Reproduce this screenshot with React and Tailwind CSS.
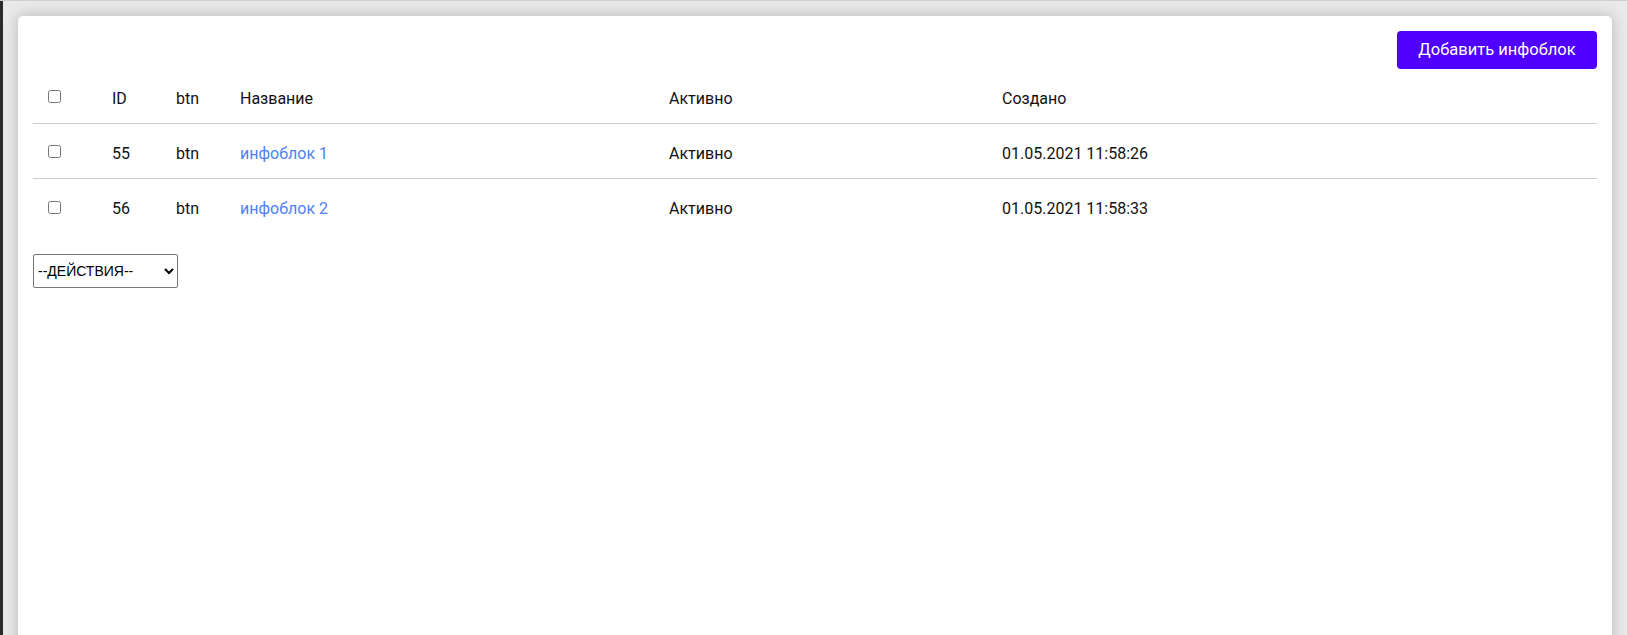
import React from "react";

const rows = [
  { id: 55, name: "инфоблок 1", created: "01.05.2021 11:58:26" },
  { id: 56, name: "инфоблок 2", created: "01.05.2021 11:58:33" },
];

const grid = "grid grid-cols-[79px_64px_64px_429px_333px_1fr] items-center pt-[5px]";

export default function App() {
  return (
    <div className="flex min-h-[635px] h-[635px] overflow-hidden bg-[#e9e9e9] border-t border-[#cfcfcf] font-['Roboto',sans-serif]">
      <div className="w-[3px] shrink-0 bg-[#2b2b2b]" />
      <div className="flex-1 pt-[15px] px-[15px]">
        <div className="bg-white rounded-t-[5px] min-h-[700px] p-[15px] shadow-[0_0_14px_rgba(0,0,0,0.22)] text-[16px] text-[#111]">
          <div className="flex justify-end">
            <button className="h-[38px] w-[200px] rounded-[4px] bg-[#5000ff] text-white text-[16.5px]">
              Добавить инфоблок
            </button>
          </div>
          <div className={`${grid} h-[55px] border-b border-[#cccccc]`}>
            <div className="pl-[15px] flex items-center -mt-[4px]">
              <input type="checkbox" className="m-0 w-[13px] h-[13px]" />
            </div>
            <div>ID</div>
            <div>btn</div>
            <div>Название</div>
            <div>Активно</div>
            <div>Создано</div>
          </div>
          {rows.map((r, i) => (
            <div
              key={r.id}
              className={`${grid} h-[55px] ${i === 0 ? "border-b border-[#cccccc]" : ""}`}
            >
              <div className="pl-[15px] flex items-center -mt-[4px]">
                <input type="checkbox" className="m-0 w-[13px] h-[13px]" />
              </div>
              <div>{r.id}</div>
              <div>btn</div>
              <div>
                <a href="#" className="text-[#4f7ff5]">
                  {r.name}
                </a>
              </div>
              <div>Активно</div>
              <div>{r.created}</div>
            </div>
          ))}
          <div className="mt-[20px]">
            <select className="w-[145px] h-[34px] border border-[#767676] rounded-[2px] bg-white text-black text-[14px] font-['Liberation_Sans',sans-serif]">
              <option>--ДЕЙСТВИЯ--</option>
            </select>
          </div>
        </div>
      </div>
    </div>
  );
}
